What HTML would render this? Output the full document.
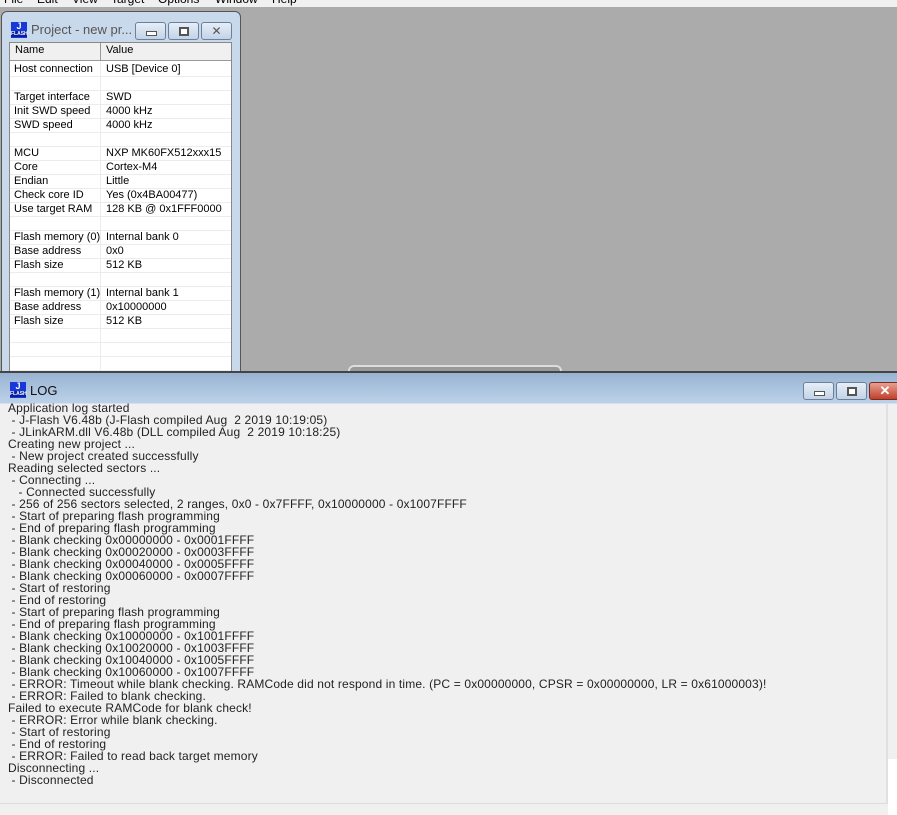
<!DOCTYPE html>
<html><head><style>
body{margin:0;width:897px;height:813px;overflow:hidden;background:#ababab;font-family:"Liberation Sans",sans-serif;position:relative}
.menu{position:absolute;left:0;top:0;width:897px;height:7px;background:#f0f0f0;overflow:hidden}
.menu span{position:absolute;top:-8px;font-size:12px;color:#000}
.pw{position:absolute;left:1px;top:11px;width:238px;height:362px;background:#c9d9ec;border:1px solid #555;border-radius:6px 6px 0 0;}
.ic{position:absolute;width:16px;height:16px;background:#1838d8;color:#fff;font-size:8px;font-weight:bold;text-align:center;line-height:9px}
.ic b{display:block;font-size:9px}
.ic i{display:block;font-style:normal;font-size:5px;line-height:6px;background:#0820a0}
.btn{position:absolute;height:16px;border:1px solid #6d7f99;border-radius:3px;background:linear-gradient(#e6eef8,#c3d3e8)}
.tbl{position:absolute;left:9px;top:42px;width:221px;height:331px;background:#fff;border:1px solid #888}
.hdr{position:absolute;left:0;top:0;width:221px;height:17px;background:#f0f0f0;border-bottom:1px solid #999;font-size:11px}
.row{position:absolute;left:0;width:221px;height:14px;border-bottom:1px solid #ececec;font-size:11px;color:#000}
.row span,.hdr span{position:absolute;top:1px}
.lw{position:absolute;left:0;top:371px;width:897px;height:442px;border-top:2px solid #444;background:linear-gradient(#98b3d2,#bcd1e9 30px,#f0f0f0 31px)}
.log{position:absolute;left:8px;top:402px;font-size:12px;line-height:12px;color:#222;white-space:pre;letter-spacing:0.15px}
</style></head><body>
<div class="menu"><span style="left:4px">File</span><span style="left:37px">Edit</span><span style="left:72px">View</span><span style="left:111px">Target</span><span style="left:158px">Options</span><span style="left:215px">Window</span><span style="left:272px">Help</span></div>
<div style="position:absolute;left:348px;top:365px;width:210px;height:8px;border:2px solid #ddd;border-bottom:none;border-radius:6px 6px 0 0;background:#999"></div>
<div class="pw">
<div class="ic" style="left:9px;top:10px"><b>J</b><i>FLASH</i></div>
<div style="position:absolute;left:29px;top:10px;font-size:13px;color:#555">Project - new pr...</div>
<div class="btn" style="left:133px;top:10px;width:29px"><div style="position:absolute;left:10px;top:8px;width:9px;height:3px;border:1px solid #555;background:#fff"></div></div>
<div class="btn" style="left:166px;top:10px;width:29px"><div style="position:absolute;left:10px;top:4px;width:6px;height:5px;border:2px solid #555;background:#fff"></div></div>
<div class="btn" style="left:199px;top:10px;width:29px;text-align:center;font-size:12px;color:#555;line-height:16px">✕</div>
</div>
<div class="tbl">
<div class="hdr"><span style="left:5px">Name</span><span style="left:96px">Value</span><div style="position:absolute;left:90px;top:0;width:1px;height:17px;background:#999"></div></div>
<div style="position:absolute;left:90px;top:18px;width:1px;height:313px;background:#ececec"></div>
<div class="row" style="top:19px"><span style="left:4px">Host connection</span><span style="left:96px">USB [Device 0]</span></div>
<div class="row" style="top:33px"></div>
<div class="row" style="top:47px"><span style="left:4px">Target interface</span><span style="left:96px">SWD</span></div>
<div class="row" style="top:61px"><span style="left:4px">Init SWD speed</span><span style="left:96px">4000 kHz</span></div>
<div class="row" style="top:75px"><span style="left:4px">SWD speed</span><span style="left:96px">4000 kHz</span></div>
<div class="row" style="top:89px"></div>
<div class="row" style="top:103px"><span style="left:4px">MCU</span><span style="left:96px">NXP MK60FX512xxx15</span></div>
<div class="row" style="top:117px"><span style="left:4px">Core</span><span style="left:96px">Cortex-M4</span></div>
<div class="row" style="top:131px"><span style="left:4px">Endian</span><span style="left:96px">Little</span></div>
<div class="row" style="top:145px"><span style="left:4px">Check core ID</span><span style="left:96px">Yes (0x4BA00477)</span></div>
<div class="row" style="top:159px"><span style="left:4px">Use target RAM</span><span style="left:96px">128 KB @ 0x1FFF0000</span></div>
<div class="row" style="top:173px"></div>
<div class="row" style="top:187px"><span style="left:4px">Flash memory (0)</span><span style="left:96px">Internal bank 0</span></div>
<div class="row" style="top:201px"><span style="left:4px">Base address</span><span style="left:96px">0x0</span></div>
<div class="row" style="top:215px"><span style="left:4px">Flash size</span><span style="left:96px">512 KB</span></div>
<div class="row" style="top:229px"></div>
<div class="row" style="top:243px"><span style="left:4px">Flash memory (1)</span><span style="left:96px">Internal bank 1</span></div>
<div class="row" style="top:257px"><span style="left:4px">Base address</span><span style="left:96px">0x10000000</span></div>
<div class="row" style="top:271px"><span style="left:4px">Flash size</span><span style="left:96px">512 KB</span></div>
<div class="row" style="top:285px"></div>
<div class="row" style="top:299px"></div>
<div class="row" style="top:313px"></div>
</div>
<div class="lw">
<div class="ic" style="left:10px;top:9px"><b>J</b><i>FLASH</i></div>
<div style="position:absolute;left:30px;top:10px;font-size:13px;color:#111">LOG</div>
<div class="btn" style="left:803px;top:9px;width:29px"><div style="position:absolute;left:10px;top:8px;width:9px;height:3px;border:1px solid #555;background:#fff"></div></div>
<div class="btn" style="left:836px;top:9px;width:29px"><div style="position:absolute;left:10px;top:4px;width:6px;height:5px;border:2px solid #555;background:#fff"></div></div>
<div class="btn" style="left:869px;top:9px;width:30px;background:linear-gradient(#e8a090,#c0402c);border-color:#7a2a20;color:#fff;font-size:13px;font-weight:bold;line-height:16px;text-align:center">✕</div>
<div style="position:absolute;left:886px;top:31px;width:2px;height:400px;background:#e0e0e0"></div>
<div style="position:absolute;left:888px;top:386px;width:9px;height:56px;background:#fff"></div>
<div style="position:absolute;left:0;top:430px;width:886px;height:1px;background:#ddd"></div>
</div>
<div class="log">Application log started
 - J-Flash V6.48b (J-Flash compiled Aug  2 2019 10:19:05)
 - JLinkARM.dll V6.48b (DLL compiled Aug  2 2019 10:18:25)
Creating new project ...
 - New project created successfully
Reading selected sectors ...
 - Connecting ...
   - Connected successfully
 - 256 of 256 sectors selected, 2 ranges, 0x0 - 0x7FFFF, 0x10000000 - 0x1007FFFF
 - Start of preparing flash programming
 - End of preparing flash programming
 - Blank checking 0x00000000 - 0x0001FFFF
 - Blank checking 0x00020000 - 0x0003FFFF
 - Blank checking 0x00040000 - 0x0005FFFF
 - Blank checking 0x00060000 - 0x0007FFFF
 - Start of restoring
 - End of restoring
 - Start of preparing flash programming
 - End of preparing flash programming
 - Blank checking 0x10000000 - 0x1001FFFF
 - Blank checking 0x10020000 - 0x1003FFFF
 - Blank checking 0x10040000 - 0x1005FFFF
 - Blank checking 0x10060000 - 0x1007FFFF
 - ERROR: Timeout while blank checking. RAMCode did not respond in time. (PC = 0x00000000, CPSR = 0x00000000, LR = 0x61000003)!
 - ERROR: Failed to blank checking.
Failed to execute RAMCode for blank check!
 - ERROR: Error while blank checking.
 - Start of restoring
 - End of restoring
 - ERROR: Failed to read back target memory
Disconnecting ...
 - Disconnected</div>
</body></html>
